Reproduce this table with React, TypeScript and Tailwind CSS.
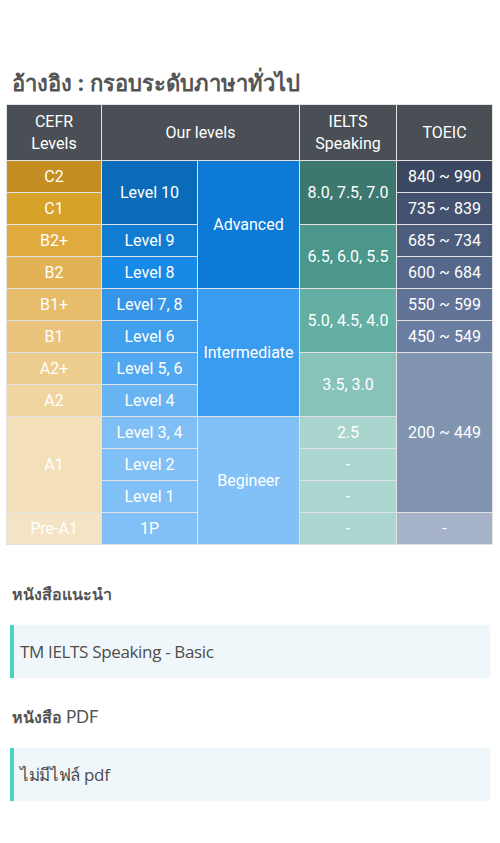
type Cell = { text: string; bg: string; rowSpan?: number };

const rows: Cell[][] = [
  [
    { text: "C2", bg: "bg-[#c38f22]" },
    { text: "Level 10", bg: "bg-[#0b6bbb]", rowSpan: 2 },
    { text: "Advanced", bg: "bg-[#0d7ad8]", rowSpan: 4 },
    { text: "8.0, 7.5, 7.0", bg: "bg-[#3d786e]", rowSpan: 2 },
    { text: "840 ~ 990", bg: "bg-[#3c4861]" },
  ],
  [
    { text: "C1", bg: "bg-[#d7a12a]" },
    { text: "735 ~ 839", bg: "bg-[#44526f]" },
  ],
  [
    { text: "B2+", bg: "bg-[#dfaa3e]" },
    { text: "Level 9", bg: "bg-[#107dd3]" },
    { text: "6.5, 6.0, 5.5", bg: "bg-[#4b978b]", rowSpan: 2 },
    { text: "685 ~ 734", bg: "bg-[#4b5c7d]" },
  ],
  [
    { text: "B2", bg: "bg-[#e3b254]" },
    { text: "Level 8", bg: "bg-[#178ae8]" },
    { text: "600 ~ 684", bg: "bg-[#55678a]" },
  ],
  [
    { text: "B1+", bg: "bg-[#e7bc6a]" },
    { text: "Level 7, 8", bg: "bg-[#3595e8]" },
    { text: "Intermediate", bg: "bg-[#3a9cf0]", rowSpan: 4 },
    { text: "5.0, 4.5, 4.0", bg: "bg-[#63afa4]", rowSpan: 2 },
    { text: "550 ~ 599", bg: "bg-[#617397]" },
  ],
  [
    { text: "B1", bg: "bg-[#eac47c]" },
    { text: "Level 6", bg: "bg-[#40a0ee]" },
    { text: "450 ~ 549", bg: "bg-[#6a7ea1]" },
  ],
  [
    { text: "A2+", bg: "bg-[#edcd8e]" },
    { text: "Level 5, 6", bg: "bg-[#52a9f1]" },
    { text: "3.5, 3.0", bg: "bg-[#88c3ba]", rowSpan: 2 },
    { text: "200 ~ 449", bg: "bg-[#8195b1]", rowSpan: 5 },
  ],
  [
    { text: "A2", bg: "bg-[#f0d5a0]" },
    { text: "Level 4", bg: "bg-[#68b4f3]" },
  ],
  [
    { text: "A1", bg: "bg-[#f3e0bb]", rowSpan: 3 },
    { text: "Level 3, 4", bg: "bg-[#7fbff6]" },
    { text: "Begineer", bg: "bg-[#81c1f7]", rowSpan: 4 },
    { text: "2.5", bg: "bg-[#a9d5ce]" },
  ],
  [
    { text: "Level 2", bg: "bg-[#80c0f6]" },
    { text: "-", bg: "bg-[#acd6d0]" },
  ],
  [
    { text: "Level 1", bg: "bg-[#80c0f6]" },
    { text: "-", bg: "bg-[#acd6d0]" },
  ],
  [
    { text: "Pre-A1", bg: "bg-[#f4e3c4]" },
    { text: "1P", bg: "bg-[#80c0f6]" },
    { text: "-", bg: "bg-[#acd6d0]" },
    { text: "-", bg: "bg-[#a5b2c8]" },
  ],
];

const thClass =
  "border border-[#e2e2e2] bg-[#4a4f55] px-1 text-center align-middle text-[16px] font-normal leading-[22px] text-white";
const tdClass = "border border-[#e2e2e2] px-1 text-center align-middle text-[16px] leading-[20px] text-white";

function InfoBox({ text }: { text: string }) {
  return (
    <div className="flex h-[53px] items-center rounded-r-[3px] border-l-4 border-[#48d3c2] bg-[#f0f7fb] pl-[6px] shadow-[0_0_2px_rgba(0,0,0,0.05)]">
      <span className="font-['Open_Sans','Noto_Sans',sans-serif] text-[17px] tracking-[-0.02em] text-[#4d4d4d]">
        {text}
      </span>
    </div>
  );
}

export default function App() {
  return (
    <div className="min-h-[843px] bg-white px-[6px] font-['Lato','Noto_Sans',sans-serif]">
      <h2 className="pl-[6px] pt-[66px] font-['Open_Sans','Noto_Sans',sans-serif] text-[22px] font-bold leading-[32px] text-[#555]">
        อ้างอิง : กรอบระดับภาษาทั่วไป
      </h2>

      <table className="mt-[6px] w-[486px] table-fixed border-collapse font-['Roboto',sans-serif]">
        <colgroup>
          <col className="w-[95px]" />
          <col className="w-[96px]" />
          <col className="w-[102px]" />
          <col className="w-[97px]" />
          <col className="w-[96px]" />
        </colgroup>
        <thead>
          <tr className="h-[56px]">
            <th className={thClass}>
              CEFR
              <br />
              Levels
            </th>
            <th className={thClass} colSpan={2}>
              Our levels
            </th>
            <th className={thClass}>
              IELTS
              <br />
              Speaking
            </th>
            <th className={thClass}>TOEIC</th>
          </tr>
        </thead>
        <tbody>
          {rows.map((row, i) => (
            <tr key={i} className="h-[32px]">
              {row.map((c, j) => (
                <td key={j} rowSpan={c.rowSpan} className={`${tdClass} ${c.bg}`}>
                  {c.text}
                </td>
              ))}
            </tr>
          ))}
        </tbody>
      </table>

      <div className="px-[4px]">
        <h3 className="mt-[37px] pl-[2px] text-[16px] font-bold leading-[24px] text-[#555]">หนังสือแนะนำ</h3>
        <div className="mt-[19px]">
          <InfoBox text="TM IELTS Speaking - Basic" />
        </div>

        <h3 className="mt-[27px] pl-[2px] text-[16px] font-bold leading-[24px] text-[#555]">
          หนังสือ <span className="text-[17px] font-normal">PDF</span>
        </h3>
        <div className="mt-[19px]">
          <InfoBox text="ไม่มีไฟล์ pdf" />
        </div>
      </div>
    </div>
  );
}
